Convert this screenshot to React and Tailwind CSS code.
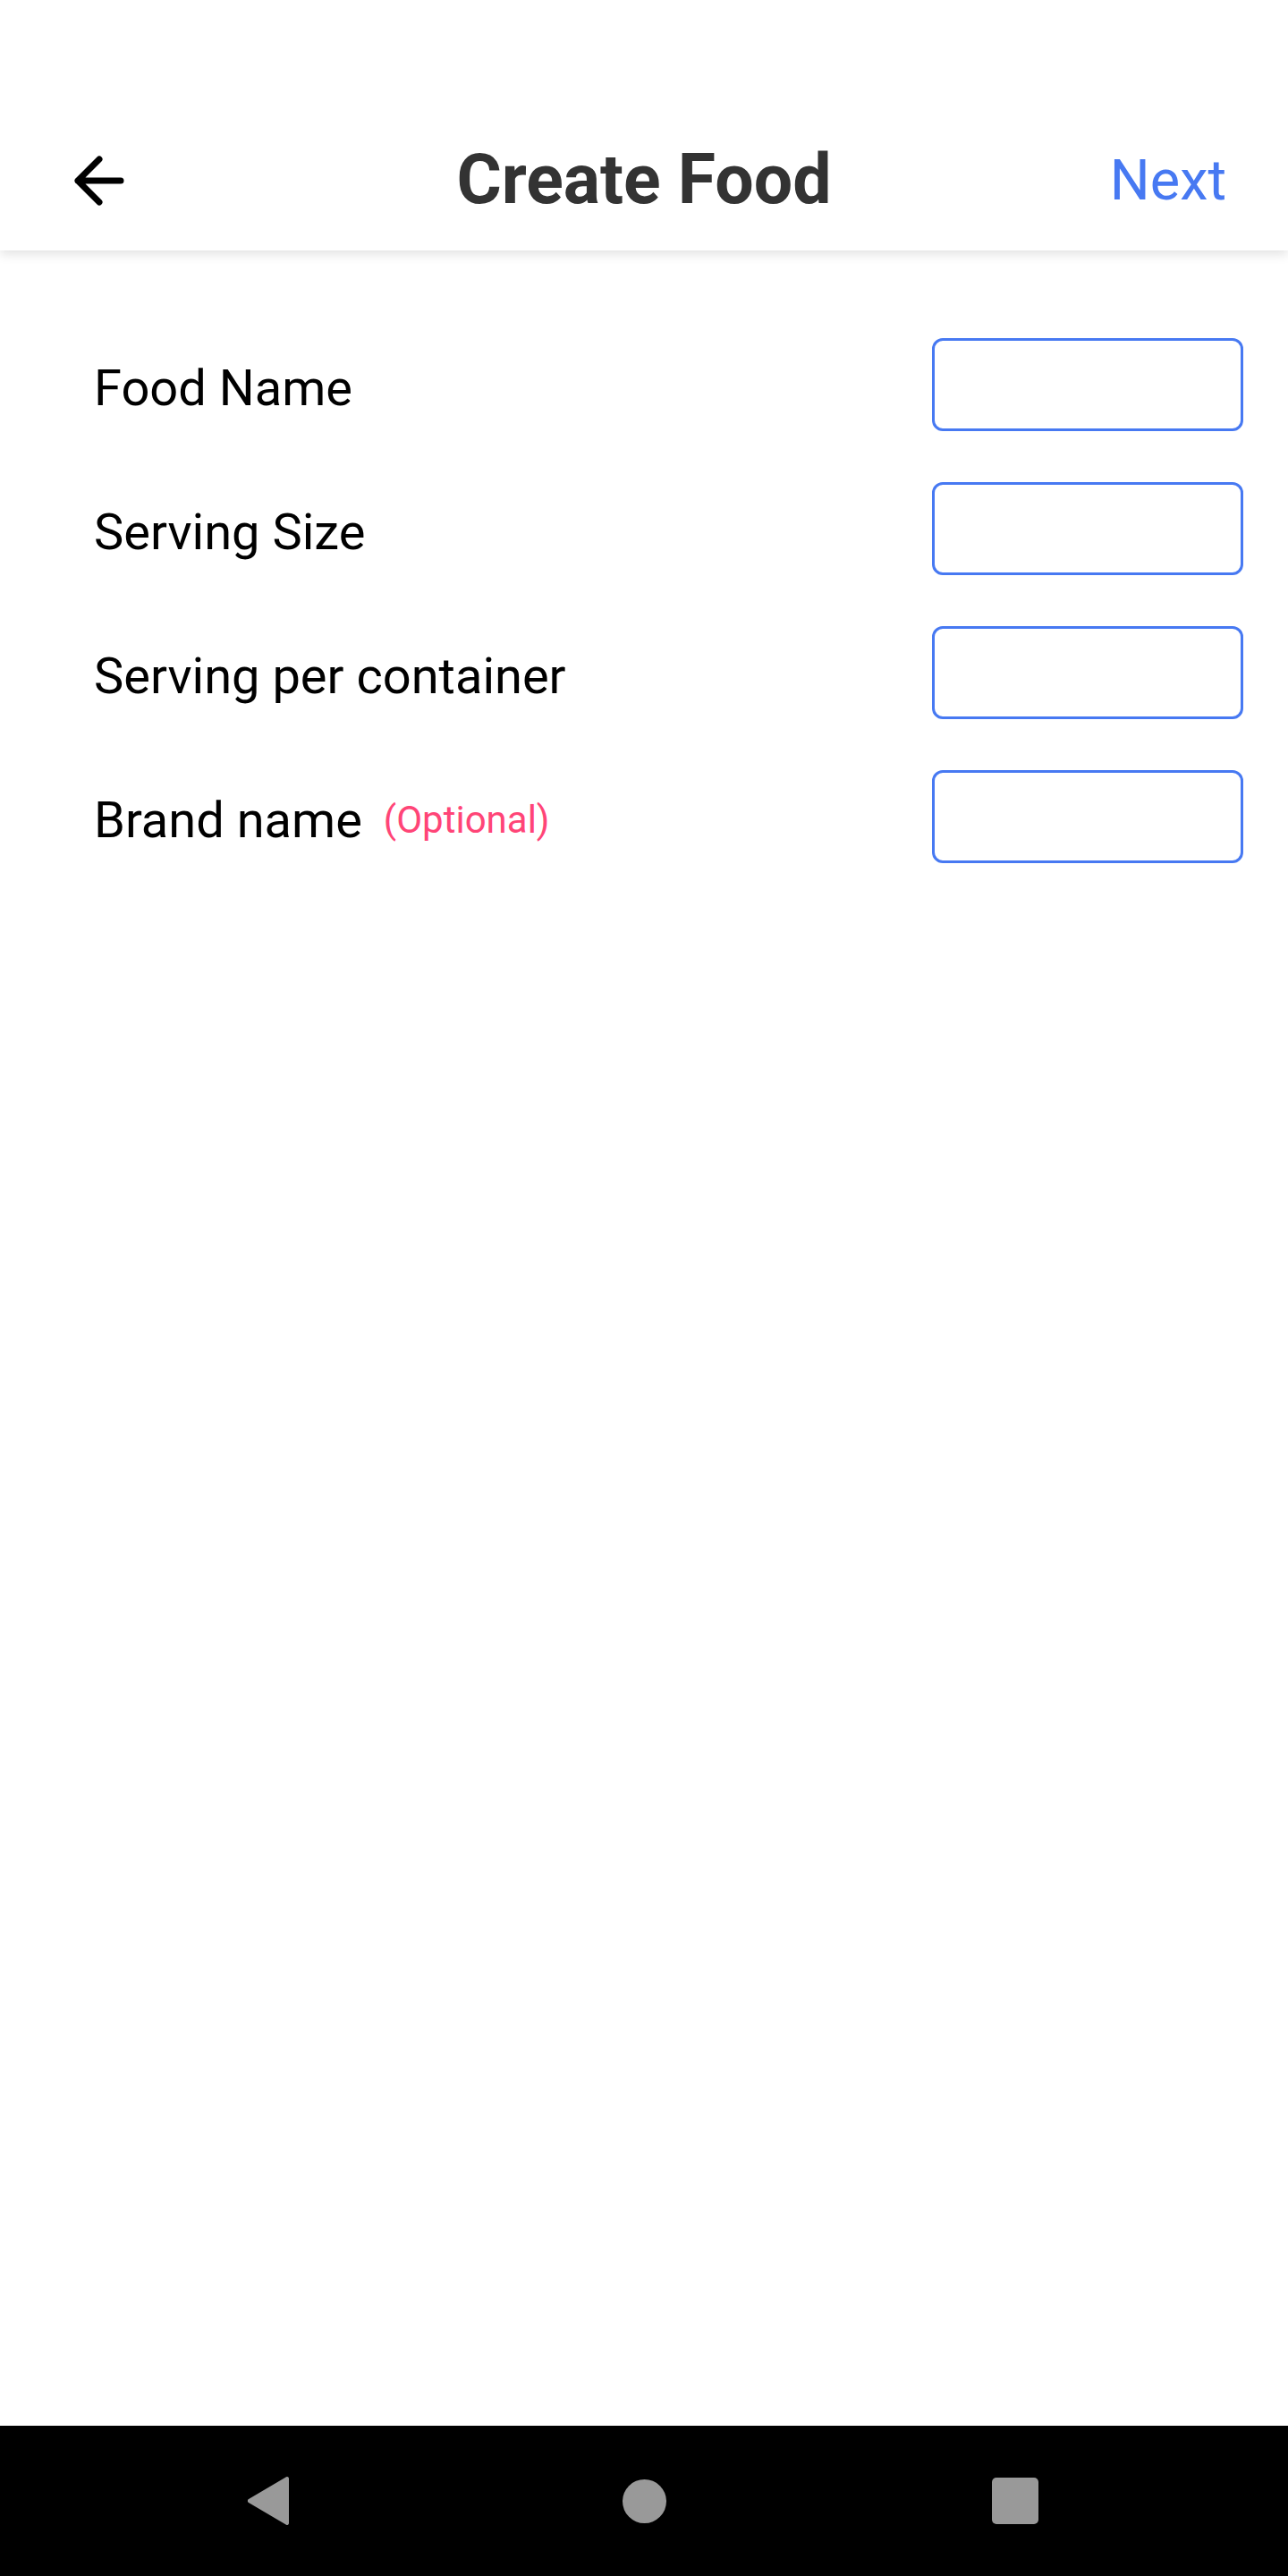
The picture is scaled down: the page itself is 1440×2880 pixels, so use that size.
import React from 'react';

// Form fields shown on the Create Food screen
const fields = [
  { label: 'Food Name' },
  { label: 'Serving Size' },
  { label: 'Serving per container' },
  { label: 'Brand name', optional: true },
];

const BackArrow = () => (
  <svg width="60" height="60" viewBox="0 0 60 60" fill="none">
    <path
      d="M54 30H6M30 6L6 30l24 24"
      stroke="#000"
      strokeWidth="7"
      strokeLinecap="round"
      strokeLinejoin="round"
    />
  </svg>
);

const Field = ({ label, optional }) => (
  <div className="flex items-center justify-between pl-[105px] pr-[50px]">
    <div className="flex items-center gap-[24px] pt-[7px]">
      <span className="text-[56px] text-black">{label}</span>
      {optional && <span className="text-[42px] text-[#ff4577]">(Optional)</span>}
    </div>
    <input
      type="text"
      className="w-[348px] h-[104px] rounded-[12px] border-[3px] border-[#4779f2] bg-white outline-none"
    />
  </div>
);

export default function App() {
  return (
    <div className="min-h-[2880px] flex flex-col bg-white" style={{ fontFamily: 'Roboto, "Noto Sans", sans-serif' }}>
      {/* App bar */}
      <header className="relative z-10 h-[280px] pt-[124px] bg-white flex items-center shadow-[0_4px_12px_rgba(0,0,0,0.12)]">
        <div className="relative flex-1 flex items-center justify-between pl-[81px] pr-[69px]">
          <button className="flex items-center">
            <BackArrow />
          </button>
          <h1 className="absolute left-1/2 -translate-x-1/2 text-[77px] font-bold text-[#333333]">Create Food</h1>
          <button className="text-[63px] text-[#4779f2]">Next</button>
        </div>
      </header>

      {/* Form */}
      <main className="flex-1 flex flex-col gap-[57px] pt-[98px]">
        {fields.map((f) => (
          <Field key={f.label} {...f} />
        ))}
      </main>

      {/* Android nav bar */}
      <nav className="h-[168px] bg-black flex items-center justify-center">
        <div className="w-[420px] flex justify-center">
          <svg width="50" height="56" viewBox="0 0 50 56">
            <path d="M48 3v50a2 2 0 0 1-3 1.7L3 30a2.3 2.3 0 0 1 0-4L45 1.3A2 2 0 0 1 48 3z" fill="#999999" />
          </svg>
        </div>
        <div className="w-[420px] flex justify-center">
          <div className="w-[49px] h-[49px] rounded-full bg-[#999999]" />
        </div>
        <div className="w-[420px] flex justify-center pr-[10px]">
          <div className="w-[52px] h-[52px] rounded-[5px] bg-[#999999]" />
        </div>
      </nav>
    </div>
  );
}
